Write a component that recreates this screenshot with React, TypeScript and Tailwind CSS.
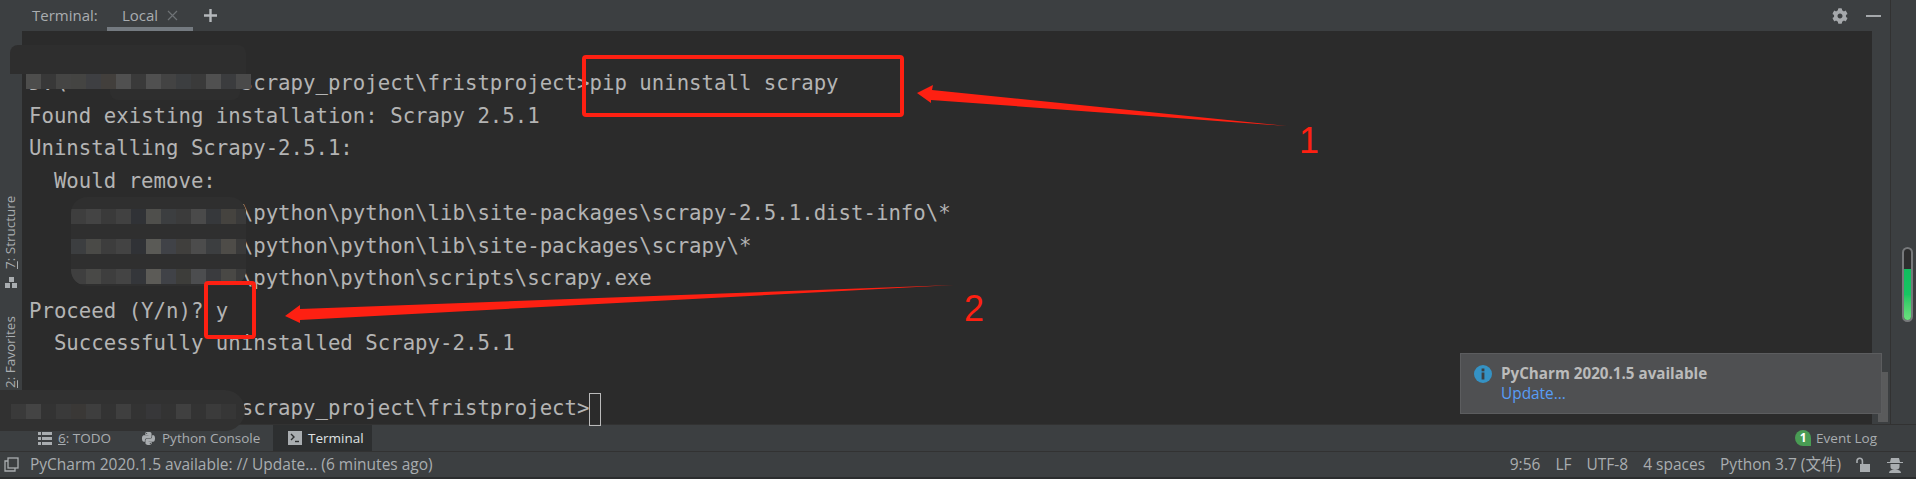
import { FaCog, FaPython } from 'react-icons/fa';

const uiFont = "font-['Open_Sans','Noto_Sans_CJK_SC',sans-serif]";

const mosaicTop = ['#4d4d4c', '#383838', '#454544', '#444442', '#3e3f42', '#423f3c', '#505050', '#3a3a3a', '#505050', '#434343', '#3c3e40', '#3a3a3a', '#505050', '#3b3c3e', '#4a4a4a'];
const mosaicRows = [
  ['#3e3e3e', '#444444', '#3a3a3a', '#414141', '#303236', '#4f4f4c', '#3c3e40', '#3b3b3b', '#4a4a4a', '#36383b', '#45433f', '#3a3a3a'],
  ['#3c3e40', '#4a4a47', '#3d3d3d', '#434343', '#303236', '#5a5a56', '#404247', '#403f3d', '#4c4c4c', '#3c3e40', '#4e4c48', '#3a3a3a'],
  ['#3f3f3f', '#494947', '#3e3e3e', '#444444', '#34363a', '#5c5b57', '#404247', '#3d3d3a', '#4c4d4f', '#3a3b3e', '#494845', '#3b3b3b'],
];
const mosaicBottom = ['#3a3a3a', '#444444', '#333333', '#3a3a3a', '#3a3836', '#3e3e3e', '#333333', '#3f3f3f', '#333333', '#373739', '#333333', '#404040', '#333333', '#3b3b3b', '#363636'];

function Mosaic({ cells }: { cells: string[] }) {
  return (
    <div className="flex">
      {cells.map((c, i) => (
        <div key={i} className="w-[15px] h-[15px] shrink-0" style={{ backgroundColor: c }} />
      ))}
    </div>
  );
}

function TerminalLine({ children }: { children?: React.ReactNode }) {
  return <div className="h-[32.5px] leading-[32.5px] whitespace-pre">{children}</div>;
}

export default function App() {
  return (
    <div className={`relative w-[1916px] h-[479px] overflow-hidden flex flex-col bg-[#3c3f41] text-[#a9adb0] ${uiFont}`}>
      <div className="flex h-[425px] border-b border-[#323232]">
        {/* left tool strip */}
        <div className="w-[22px] shrink-0 flex flex-col items-center pt-[196px] text-[13.5px] leading-none">
          <div className="[writing-mode:vertical-rl] rotate-180 h-[73px] whitespace-nowrap text-center"><span className="underline">7</span>: Structure</div>
          <svg className="mt-[8px]" width="13" height="12" viewBox="0 0 13 12" fill="#a9adb0">
            <rect x="4" y="0" width="5" height="5" />
            <rect x="0" y="6" width="5" height="5" />
            <rect x="7" y="6" width="5" height="5" />
          </svg>
          <div className="mt-[30px] [writing-mode:vertical-rl] rotate-180 h-[69px] whitespace-nowrap text-center"><span className="underline">2</span>: Favorites</div>
        </div>

        <div className="flex-1 flex flex-col min-w-0">
          {/* tool window header */}
          <div className="h-[31px] shrink-0 flex items-center text-[15px] pr-[9px]">
            <span className="ml-[10px] w-[75px]">Terminal:</span>
            <div className="relative h-full w-[86px] flex items-center pl-[15px] border-b-[4px] border-[#747a80] pt-[3px]">
              <span>Local</span>
              <svg className="ml-[9px]" width="11" height="11" viewBox="0 0 11 11" stroke="#6e7275" strokeWidth="1.2">
                <path d="M1 1l9 9M10 1l-9 9" />
              </svg>
            </div>
            <svg className="ml-[11px]" width="13" height="13" viewBox="0 0 13 13" stroke="#b4b8bb" strokeWidth="2.4">
              <path d="M6.500 0v13M0 6.500h13" />
            </svg>
            <FaCog className="ml-auto text-[#a5a8ab]" size={16} />
            <div className="ml-[18px] w-[15px] h-[2px] bg-[#a5a8ab]" />
          </div>

          <div className="flex-1 flex min-h-0">
            {/* terminal output */}
            <div className="flex-1 bg-[#2b2b2b] pt-[36px] pl-[7px] text-[20.7px] text-[#b4b4b4] font-['DejaVu_Sans_Mono',monospace]">
              <TerminalLine>{'D:\\              scrapy_project\\fristproject>pip uninstall scrapy'}</TerminalLine>
              <TerminalLine>Found existing installation: Scrapy 2.5.1</TerminalLine>
              <TerminalLine>Uninstalling Scrapy-2.5.1:</TerminalLine>
              <TerminalLine>{'  Would remove:'}</TerminalLine>
              <TerminalLine>{'                 \\python\\python\\lib\\site-packages\\scrapy-2.5.1.dist-info\\*'}</TerminalLine>
              <TerminalLine>{'                 \\python\\python\\lib\\site-packages\\scrapy\\*'}</TerminalLine>
              <TerminalLine>{'                 \\python\\python\\scripts\\scrapy.exe'}</TerminalLine>
              <TerminalLine>Proceed (Y/n)? y</TerminalLine>
              <TerminalLine>{'  Successfully uninstalled Scrapy-2.5.1'}</TerminalLine>
              <TerminalLine />
              <TerminalLine>
                {'                 scrapy_project\\fristproject>'}
                <span className="inline-block align-middle w-[12px] h-[33px] border border-[#bbbbbb]" />
              </TerminalLine>
            </div>
            {/* scrollbar */}
            <div className="w-[18px] shrink-0 pt-[341px] pl-[6px]">
              <div className="w-[10px] h-[50px] bg-[#5a5b5c]" />
            </div>
          </div>
        </div>

        {/* right strip with memory meter */}
        <div className="w-[26px] shrink-0 border-l border-[#323232] pt-[247px] pl-[11px]">
          <div className="w-[11px] h-[75px] rounded-full border-[2px] border-[#77797b] bg-[#2d2d2d] overflow-hidden flex flex-col justify-end">
            <div className="h-[51px] bg-gradient-to-b from-[#10bd5e] via-[#16c562] to-[#6be07e]" />
          </div>
        </div>
      </div>

      {/* tool window buttons */}
      <div className="h-[26px] flex items-center text-[13.5px] relative">
        <svg className="ml-[38px]" width="14" height="13" viewBox="0 0 14 13" fill="#a9adb0">
          <rect x="0" y="0" width="3" height="3" />
          <rect x="4" y="0" width="10" height="3" />
          <rect x="0" y="5" width="3" height="3" />
          <rect x="4" y="5" width="10" height="3" />
          <rect x="0" y="10" width="3" height="3" />
          <rect x="4" y="10" width="10" height="3" />
        </svg>
        <span className="ml-[6px] w-[83px]"><span className="underline">6</span>: TODO</span>
        <FaPython className="text-[#a9adb0]" size={15} />
        <span className="ml-[6px] w-[111px]">Python Console</span>
        <div className="h-full w-[99px] bg-[#2d2f30] flex items-center pl-[15px] text-[#dfe1e2]">
          <svg width="14" height="14" viewBox="0 0 14 14">
            <rect width="14" height="14" fill="#a9adb0" />
            <path d="M3 3l3 3-3 3" stroke="#2d2f30" strokeWidth="1.4" fill="none" />
            <path d="M7 10.500h4" stroke="#2d2f30" strokeWidth="1.4" />
          </svg>
          <span className="ml-[6px]">Terminal</span>
        </div>
        <div className="ml-auto flex items-center pr-[39px]">
          <div className="w-[16px] h-[16px] rounded-full rounded-br-none bg-[#499c54] flex items-center justify-center text-[12px] font-bold text-white">1</div>
          <span className="ml-[5px]">Event Log</span>
        </div>
      </div>

      {/* status bar */}
      <div className="h-[26px] border-t border-[#323232] flex items-center text-[15.5px] relative">
        <svg className="ml-[4px]" width="15" height="15" viewBox="0 0 15 15" fill="none" stroke="#a9adb0" strokeWidth="1.3">
          <rect x="4" y="1" width="10" height="10" />
          <path d="M4 4H1v10h10v-3" />
        </svg>
        <span className="ml-[11px]">PyCharm 2020.1.5 available: // Update... (6 minutes ago)</span>
        <div className="ml-auto flex items-center">
          <span>9:56</span>
          <span className="ml-[15px]">LF</span>
          <span className="ml-[15px]">UTF-8</span>
          <span className="ml-[15px]">4 spaces</span>
          <span className="ml-[15px]">Python 3.7 (文件)</span>
          <svg className="ml-[15px]" width="14" height="15" viewBox="0 0 14 15" fill="none">
            <path d="M1 6V4a2.700 2.700 0 0 1 5.400 0v3" stroke="#a9adb0" strokeWidth="1.6" />
            <rect x="4" y="7" width="10" height="8" fill="#a9adb0" />
          </svg>
          <svg className="ml-[17px] mr-[13px]" width="16" height="16" viewBox="0 0 16 16" fill="#a9adb0">
            <path d="M4 1h8l1 4h3v1H0V5h3z" />
            <path d="M3.500 7h9v3c0 2-2 3-4.500 3s-4.500-1-4.500-3z" />
            <path d="M2 16c0-2 2-3 3-3h6c1 0 3 1 3 3z" />
          </svg>
        </div>
      </div>
      <div className="h-[2px] bg-[#2b2d2e]" />

      {/* mosaics hiding the user's path */}
      <div className="absolute left-[10px] top-[45px] w-[236px] h-[29px] rounded-t-lg bg-[#2e2e2e]" />
      <div className="absolute left-[26px] top-[74px]"><Mosaic cells={mosaicTop} /></div>
      <div className="absolute left-[110px] top-[89px] w-[130px] h-[11px] rounded-b-lg bg-[#2e2e2e]" />

      <div className="absolute left-[71px] top-[197px] w-[175px] h-[89px] rounded-2xl overflow-hidden bg-[#2f2f2f] flex flex-col pt-[12px] gap-[15px]">
        {mosaicRows.map((row, i) => (
          <Mosaic key={i} cells={row} />
        ))}
      </div>

      <div className="absolute left-0 top-[390px] w-[245px] h-[41px] rounded-r-3xl bg-[#313131] pl-[11px] pt-[14px]">
        <Mosaic cells={mosaicBottom} />
      </div>

      {/* update notification */}
      <div className="absolute left-[1460px] top-[353px] w-[422px] h-[61px] bg-[#4f5052] border border-[#5c5d5f] pl-[13px] pt-[9px] flex">
        <svg className="mt-[2px]" width="18" height="18" viewBox="0 0 18 18">
          <circle cx="9" cy="9" r="9" fill="#3592c4" />
          <rect x="7.600" y="3.500" width="2.800" height="2.800" fill="#3c3f41" />
          <rect x="7.600" y="7.500" width="2.800" height="7" fill="#3c3f41" />
        </svg>
        <div className="ml-[9px]">
          <div className="text-[15.2px] leading-[20px] font-bold text-[#bbbbbb]">PyCharm 2020.1.5 available</div>
          <div className="text-[15.4px] leading-[20px] text-[#589df6] mt-[1px]">Update...</div>
        </div>
      </div>

      {/* red annotations */}
      <div className="absolute left-[582px] top-[55px] w-[322px] h-[62px] rounded-[4px] border-[4px] border-[#fe2012]" />
      <div className="absolute left-[204px] top-[281px] w-[52px] h-[58px] rounded-[4px] border-[4px] border-[#fe2012]" />
      <svg className="absolute left-0 top-0 pointer-events-none" width="1916" height="479" fill="#fe2012">
        <path d="M917 93L933 85L932 90L1287 126L931 100L931 103Z" />
        <path d="M285 316L300 305L300 309L954 285L300 320L300 323Z" />
      </svg>
      <span className="absolute left-[1299px] top-[121px] text-[36px] leading-[40px] text-[#fe2012] font-['Liberation_Sans',sans-serif] font-light">1</span>
      <span className="absolute left-[964px] top-[289px] text-[36px] leading-[40px] text-[#fe2012] font-['Liberation_Sans',sans-serif] font-light">2</span>
    </div>
  );
}
